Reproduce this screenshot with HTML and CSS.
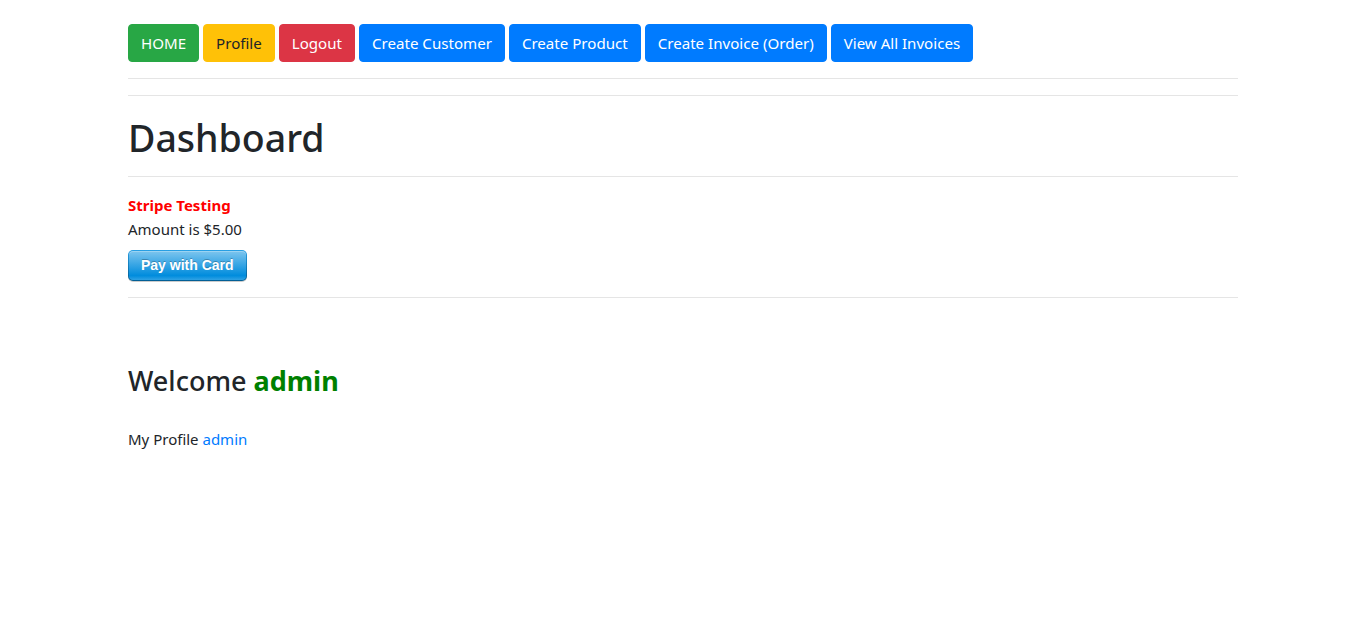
FILE: index.html
```html
<!DOCTYPE html>
<html lang="en">
<head>
<meta charset="utf-8">
<title>Dashboard</title>
<link rel="stylesheet" href="styles.css">
</head>
<body>
<div class="container">
  <nav class="nav">
    <a class="btn btn-success" href="#">HOME</a>
    <a class="btn btn-warning" href="#">Profile</a>
    <a class="btn btn-danger" href="#">Logout</a>
    <a class="btn btn-primary" href="#">Create Customer</a>
    <a class="btn btn-primary" href="#">Create Product</a>
    <a class="btn btn-primary" href="#">Create Invoice (Order)</a>
    <a class="btn btn-primary" href="#">View All Invoices</a>
  </nav>
  <hr class="rule">
  <hr class="rule">
  <h1 class="title">Dashboard</h1>
  <hr class="rule">
  <section class="stripe">
    <div class="stripe-title">Stripe Testing</div>
    <div class="amount">Amount is $5.00</div>
    <button class="stripe-button" type="button"><span>Pay with Card</span></button>
  </section>
  <hr class="rule">
  <h3 class="welcome">Welcome <span class="user">admin</span></h3>
  <p class="profile-line">My Profile <a href="#" class="link">admin</a></p>
</div>
</body>
</html>
```
FILE: styles.css
```css
* { box-sizing: border-box; }
html, body { margin: 0; padding: 0; background: #fff; }
body {
  font-family: "Noto Sans", "Open Sans", sans-serif;
  font-size: 16px;
  line-height: 1.5;
  color: #212529;
}
.container {
  width: 1140px;
  margin: 0 auto;
  padding: 24px 15px 0;
}
.nav {
  display: flex;
  flex-wrap: wrap;
  gap: 4px;
}
.btn {
  display: inline-block;
  height: 38px;
  padding: 6px 12px;
  font-size: 15.1px;
  line-height: 24px;
  border: 1px solid transparent;
  border-radius: 4px;
  text-decoration: none;
  color: #fff;
  white-space: nowrap;
}
.btn-success { background: #28a745; border-color: #28a745; }
.btn-warning { background: #ffc107; border-color: #ffc107; color: #212529; }
.btn-danger { background: #dc3545; border-color: #dc3545; }
.btn-primary { background: #007bff; border-color: #007bff; }
.rule {
  margin: 16px 0;
  border: 0;
  border-top: 1px solid rgba(0,0,0,.1);
  height: 0;
}
.title {
  margin: 0;
  font-size: 37.5px;
  font-weight: 500;
  line-height: 48px;
  padding-top: 2px;
  height: 48px;
}
.stripe { display: flex; flex-direction: column; align-items: flex-start; }
.stripe-title { color: #f00; font-weight: 700; font-size: 15px; line-height: 24px; }
.amount { font-size: 15px; line-height: 24px; }
.stripe-button {
  margin-top: 9px;
  display: inline-block;
  background-image: linear-gradient(#28a0e5, #015e94);
  border: 0;
  padding: 1px;
  border-radius: 5px;
  box-shadow: 0 1px 0 rgba(0,0,0,.2);
  cursor: pointer;
}
.stripe-button span {
  display: block;
  padding: 0 12px;
  height: 29px;
  line-height: 29px;
  background-image: linear-gradient(#7dc5ee, #008cdd 85%, #30a2e4);
  font-size: 14px;
  color: #fff;
  font-weight: bold;
  font-family: "Liberation Sans", Arial, sans-serif;
  text-shadow: 0 -1px 0 rgba(0,0,0,.25);
  box-shadow: inset 0 1px 0 rgba(255,255,255,.25);
  border-radius: 4px;
}
.welcome {
  margin: 66px 0 0;
  font-size: 27px;
  font-weight: 500;
  line-height: 34px;
}
.user { color: green; font-weight: 700; }
.profile-line { margin: 29px 0 0; font-size: 15px; line-height: 24px; }
.link { color: #007bff; text-decoration: none; }
```
